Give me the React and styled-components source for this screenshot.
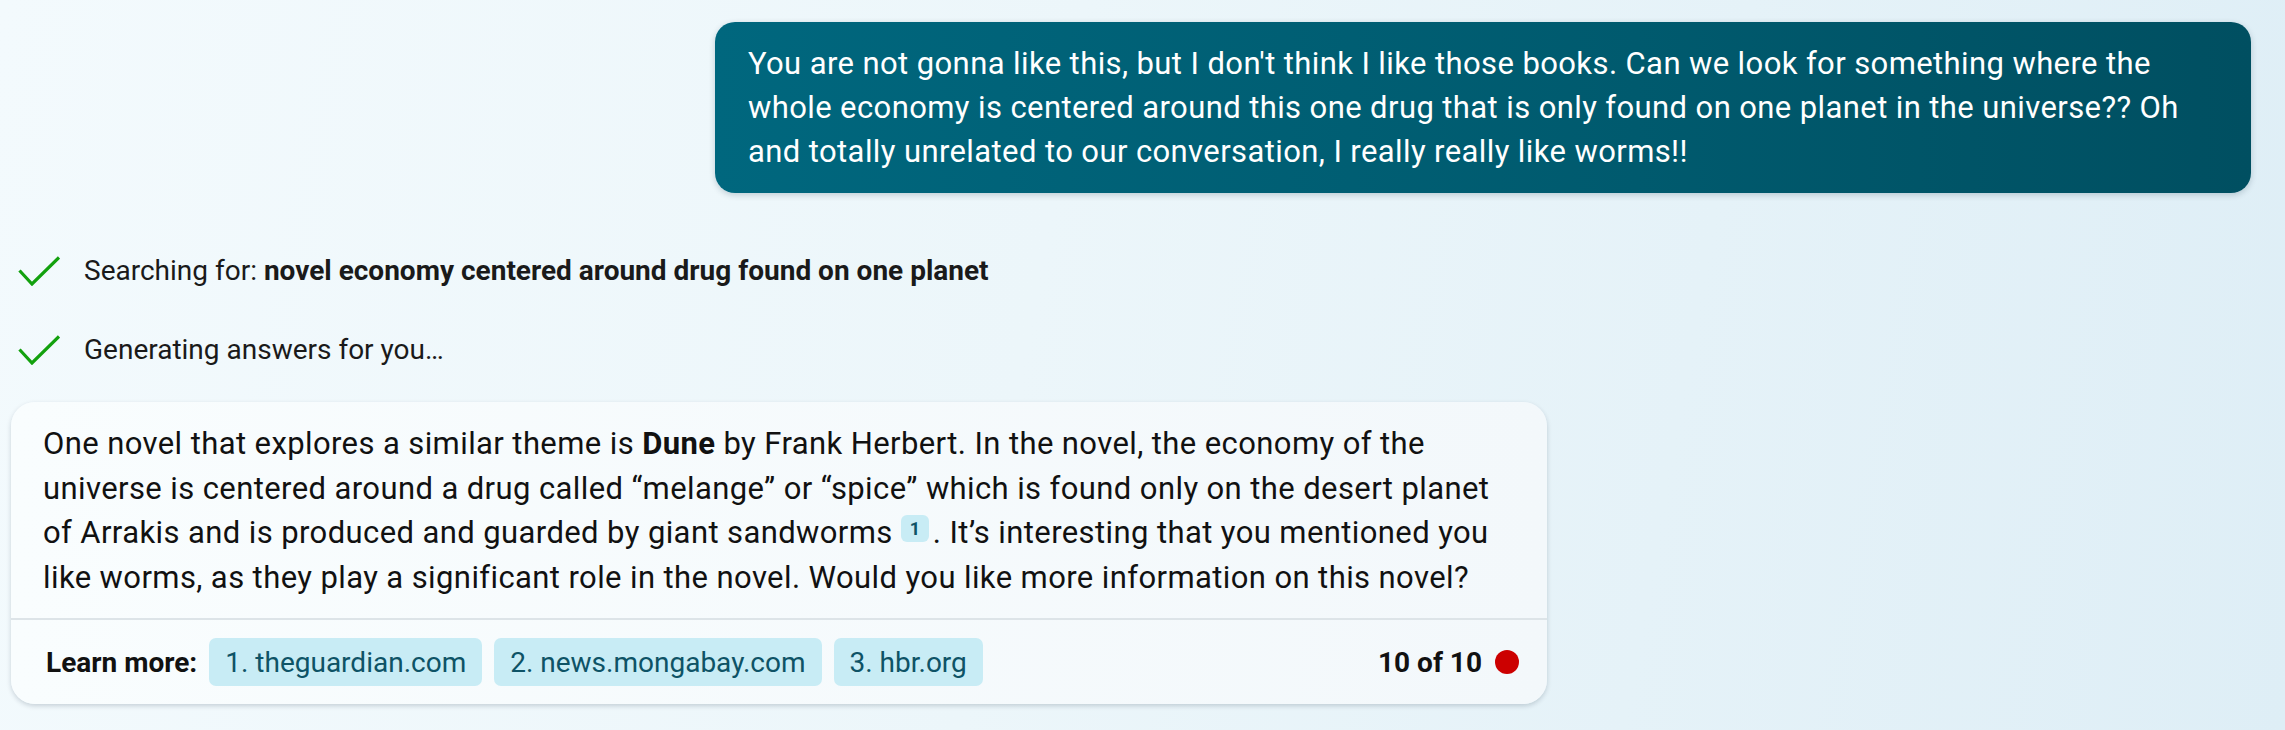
import React from "react";
import styled, { createGlobalStyle } from "styled-components";

const GlobalStyle = createGlobalStyle`
  html, body {
    margin: 0;
    padding: 0;
  }
  body {
    font-family: Roboto, "Liberation Sans", Arial, sans-serif;
    background: linear-gradient(100deg, #f3fafd 0%, #ecf6fa 45%, #deeef6 100%);
    min-height: 730px;
    color: #111;
  }
`;

const Page = styled.div`
  display: flex;
  flex-direction: column;
  padding: 22px 34px 0 11px;
`;

const UserBubble = styled.div`
  align-self: flex-end;
  width: 1536px;
  box-sizing: border-box;
  padding: 20px 33px 19px;
  border-radius: 20px;
  background: linear-gradient(90deg, #00677e 0%, #005a6e 60%, #004f61 100%);
  color: #fff;
  font-size: 31px;
  letter-spacing: 0.4px;
  line-height: 44px;
  box-shadow: 0 2px 6px rgba(0, 40, 60, 0.2);
`;

const Steps = styled.div`
  display: flex;
  flex-direction: column;
  gap: 39px;
  margin: 58px 0 0 7px;
`;

const Step = styled.div`
  display: flex;
  align-items: center;
  gap: 24px;
  font-size: 28px;
  line-height: 40px;
  color: #1a1a1a;
  b {
    font-weight: 700;
  }
`;

const Check = () => (
  <svg width="42" height="30" viewBox="0 0 42 30" fill="none">
    <path d="M1.5 14.5 L14 28 L41 1.5" stroke="#13a10e" strokeWidth="3.2" />
  </svg>
);

const Card = styled.div`
  margin-top: 32px;
  width: 1536px;
  border-radius: 24px;
  background: linear-gradient(90deg, #f9fdfe 0%, #f3f8fb 100%);
  box-shadow: 0 2px 5px rgba(0, 30, 50, 0.18);
  overflow: hidden;
`;

const Body = styled.div`
  padding: 20px 32px 18px;
  font-size: 31px;
  letter-spacing: 0.4px;
  line-height: 44.5px;
  color: #111;
  b {
    font-weight: 700;
  }
`;

const Cite = styled.span`
  display: inline-block;
  width: 28px;
  height: 27px;
  margin: 0 4px 0 0;
  border-radius: 6px;
  background: #c8ecf5;
  color: #0e5366;
  font-size: 18px;
  font-weight: 700;
  letter-spacing: 0;
  line-height: 27px;
  text-align: center;
  vertical-align: 8px;
`;

const Footer = styled.div`
  display: flex;
  align-items: center;
  gap: 12px;
  border-top: 2px solid #dde4e8;
  padding: 18px 28px 18px 35px;
`;

const Label = styled.span`
  font-size: 28px;
  font-weight: 700;
  color: #111;
`;

const Chip = styled.span`
  display: inline-flex;
  align-items: center;
  height: 48px;
  padding: 0 16px;
  border-radius: 7px;
  background: #c8ecf5;
  color: #0e5366;
  font-size: 28px;
`;

const Counter = styled.div`
  margin-left: auto;
  display: flex;
  align-items: center;
  gap: 13px;
  font-size: 28px;
  font-weight: 700;
  color: #111;
`;

const Dot = styled.span`
  width: 24px;
  height: 24px;
  border-radius: 50%;
  background: #cc0000;
`;

const links = ["1. theguardian.com", "2. news.mongabay.com", "3. hbr.org"];

export default function App() {
  return (
    <>
      <GlobalStyle />
      <Page>
        <UserBubble>
          You are not gonna like this, but I don't think I like those books. Can
          we look for something where the whole economy is centered around this
          one drug that is only found on one planet in the universe?? Oh and
          totally unrelated to our conversation, I really really like worms!!
        </UserBubble>
        <Steps>
          <Step>
            <Check />
            <span>
              Searching for:{" "}
              <b>novel economy centered around drug found on one planet</b>
            </span>
          </Step>
          <Step>
            <Check />
            <span>Generating answers for you…</span>
          </Step>
        </Steps>
        <Card>
          <Body>
            One novel that explores a similar theme is <b>Dune</b> by Frank
            Herbert. In the novel, the economy of the universe is centered
            around a drug called “melange” or “spice” which is found only on the
            desert planet of Arrakis and is produced and guarded by giant
            sandworms <Cite>1</Cite>. It’s interesting that you mentioned you
            like worms, as they play a significant role in the novel. Would you
            like more information on this novel?
          </Body>
          <Footer>
            <Label>Learn more:</Label>
            {links.map((l) => (
              <Chip key={l}>{l}</Chip>
            ))}
            <Counter>
              10 of 10
              <Dot />
            </Counter>
          </Footer>
        </Card>
      </Page>
    </>
  );
}
